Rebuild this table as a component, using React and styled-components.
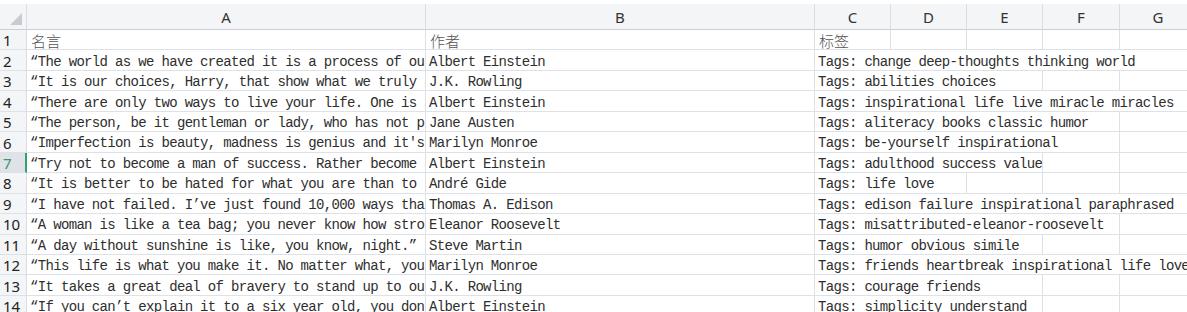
import React from "react";
import styled, { createGlobalStyle, css } from "styled-components";

const COLS = [27, 399, 389, 76, 76, 76, 77, 77];
const LETTERS = ["A", "B", "C", "D", "E", "F", "G"];
const CHAR_W = 7.73;
const template = COLS.map(w => `${w}px`).join(" ");

const rows = [
  ["名言", "作者", "标签"],
  [
    "“The world as we have created it is a process of our thinking. It cannot be changed without changing our thinking.”",
    "Albert Einstein",
    "Tags: change deep-thoughts thinking world"
  ],
  [
    "“It is our choices, Harry, that show what we truly are, far more than our abilities.”",
    "J.K. Rowling",
    "Tags: abilities choices"
  ],
  [
    "“There are only two ways to live your life. One is as though nothing is a miracle. The other is as though everything is a miracle.”",
    "Albert Einstein",
    "Tags: inspirational life live miracle miracles"
  ],
  [
    "“The person, be it gentleman or lady, who has not pleasure in a good novel, must be intolerably stupid.”",
    "Jane Austen",
    "Tags: aliteracy books classic humor"
  ],
  [
    "“Imperfection is beauty, madness is genius and it's better to be absolutely ridiculous than absolutely boring.”",
    "Marilyn Monroe",
    "Tags: be-yourself inspirational"
  ],
  [
    "“Try not to become a man of success. Rather become a man of value.”",
    "Albert Einstein",
    "Tags: adulthood success value"
  ],
  [
    "“It is better to be hated for what you are than to be loved for what you are not.”",
    "André Gide",
    "Tags: life love"
  ],
  [
    "“I have not failed. I’ve just found 10,000 ways that won't work.”",
    "Thomas A. Edison",
    "Tags: edison failure inspirational paraphrased"
  ],
  [
    "“A woman is like a tea bag; you never know how strong it is until it's in hot water.”",
    "Eleanor Roosevelt",
    "Tags: misattributed-eleanor-roosevelt"
  ],
  [
    "“A day without sunshine is like, you know, night.”",
    "Steve Martin",
    "Tags: humor obvious simile"
  ],
  [
    "“This life is what you make it. No matter what, you're going to mess up sometimes, it's a universal truth.”",
    "Marilyn Monroe",
    "Tags: friends heartbreak inspirational life love"
  ],
  [
    "“It takes a great deal of bravery to stand up to our enemies, but just as much to stand up to our friends.”",
    "J.K. Rowling",
    "Tags: courage friends"
  ],
  [
    "“If you can’t explain it to a six year old, you don't understand it yourself.”",
    "Albert Einstein",
    "Tags: simplicity understand"
  ]
];

const SELECTED_ROW = 7;

// how many columns the text in C spills across, like a spreadsheet does
const spanFor = (text, ascii) => {
  const width = 3 + (ascii ? text.length * CHAR_W : text.length * 16);
  let total = 0;
  for (let i = 3; i < COLS.length; i++) {
    total += COLS[i];
    if (width <= total) return i - 2;
  }
  return COLS.length - 3;
};

const GlobalStyle = createGlobalStyle`
  html, body {
    margin: 0;
    padding: 0;
    background: #fff;
    overflow: hidden;
  }
`;

const Sheet = styled.div`
  width: 1187px;
  height: 312px;
  padding-top: 4px;
  box-sizing: border-box;
  overflow: hidden;
  background: #fff;
`;

const Row = styled.div`
  display: grid;
  grid-template-columns: ${template};
  height: ${props => (props.head ? "26px" : "20.46px")};
`;

const Corner = styled.div`
  position: relative;
  background: #f4f5f7;
  border-right: 1px solid #d9dde4;
  border-bottom: 1px solid #c9d0db;
  box-sizing: border-box;

  &::after {
    content: "";
    position: absolute;
    right: 4px;
    bottom: 4px;
    width: 0;
    height: 0;
    border-left: 12px solid transparent;
    border-bottom: 12px solid #c9cbcf;
  }
`;

const ColHead = styled.div`
  display: flex;
  align-items: center;
  justify-content: center;
  background: #f4f5f7;
  border-right: 1px solid #d9dde4;
  border-bottom: 1px solid #c9d0db;
  box-sizing: border-box;
  font-family: "Noto Sans", "Liberation Sans", sans-serif;
  font-size: 15px;
  color: #333;
`;

const RowHead = styled.div`
  display: flex;
  align-items: center;
  padding: 1px 0 0 3px;
  box-sizing: border-box;
  background: ${props => (props.selected ? "#dfe2e7" : "#f4f5f7")};
  border-bottom: 1px solid #dde1e8;
  border-right: ${props =>
    props.selected ? "2px solid #2fa36b" : "1px solid #d9dde4"};
  font-family: "Noto Sans", "Liberation Sans", sans-serif;
  font-size: 15px;
  color: ${props => (props.selected ? "#2f9a68" : "#222")};
  overflow: hidden;
`;

const Cell = styled.div`
  grid-column: span ${props => props.span || 1};
  display: flex;
  align-items: center;
  box-sizing: border-box;
  border-right: 1px solid #dde1e8;
  border-bottom: 1px solid #dde1e8;
  white-space: nowrap;
  overflow: hidden;
  color: #2e2e2e;
  ${props =>
    props.cjk
      ? css`
          padding: 1px 0 0 4px;
          font-family: "Noto Sans CJK SC", sans-serif;
          font-size: 15px;
          font-weight: 300;
          color: #555;
        `
      : css`
          padding: 3px 0 0 3px;
          font-family: "Liberation Mono", monospace;
          font-size: 14px;
          letter-spacing: -0.67px;
        `}
`;

export default function App() {
  return (
    <>
      <GlobalStyle />
      <Sheet>
        <Row head>
          <Corner />
          {LETTERS.map(l => (
            <ColHead key={l}>{l}</ColHead>
          ))}
        </Row>
        {rows.map((r, i) => {
          const n = i + 1;
          const cjk = i === 0;
          const span = spanFor(r[2], !cjk);
          const blanks = COLS.length - 3 - span;
          return (
            <Row key={n}>
              <RowHead selected={n === SELECTED_ROW}>{n}</RowHead>
              <Cell cjk={cjk}>{r[0]}</Cell>
              <Cell cjk={cjk}>{r[1]}</Cell>
              <Cell cjk={cjk} span={span}>
                {r[2]}
              </Cell>
              {Array.from({ length: blanks }).map((_, k) => (
                <Cell key={k} />
              ))}
            </Row>
          );
        })}
      </Sheet>
    </>
  );
}
